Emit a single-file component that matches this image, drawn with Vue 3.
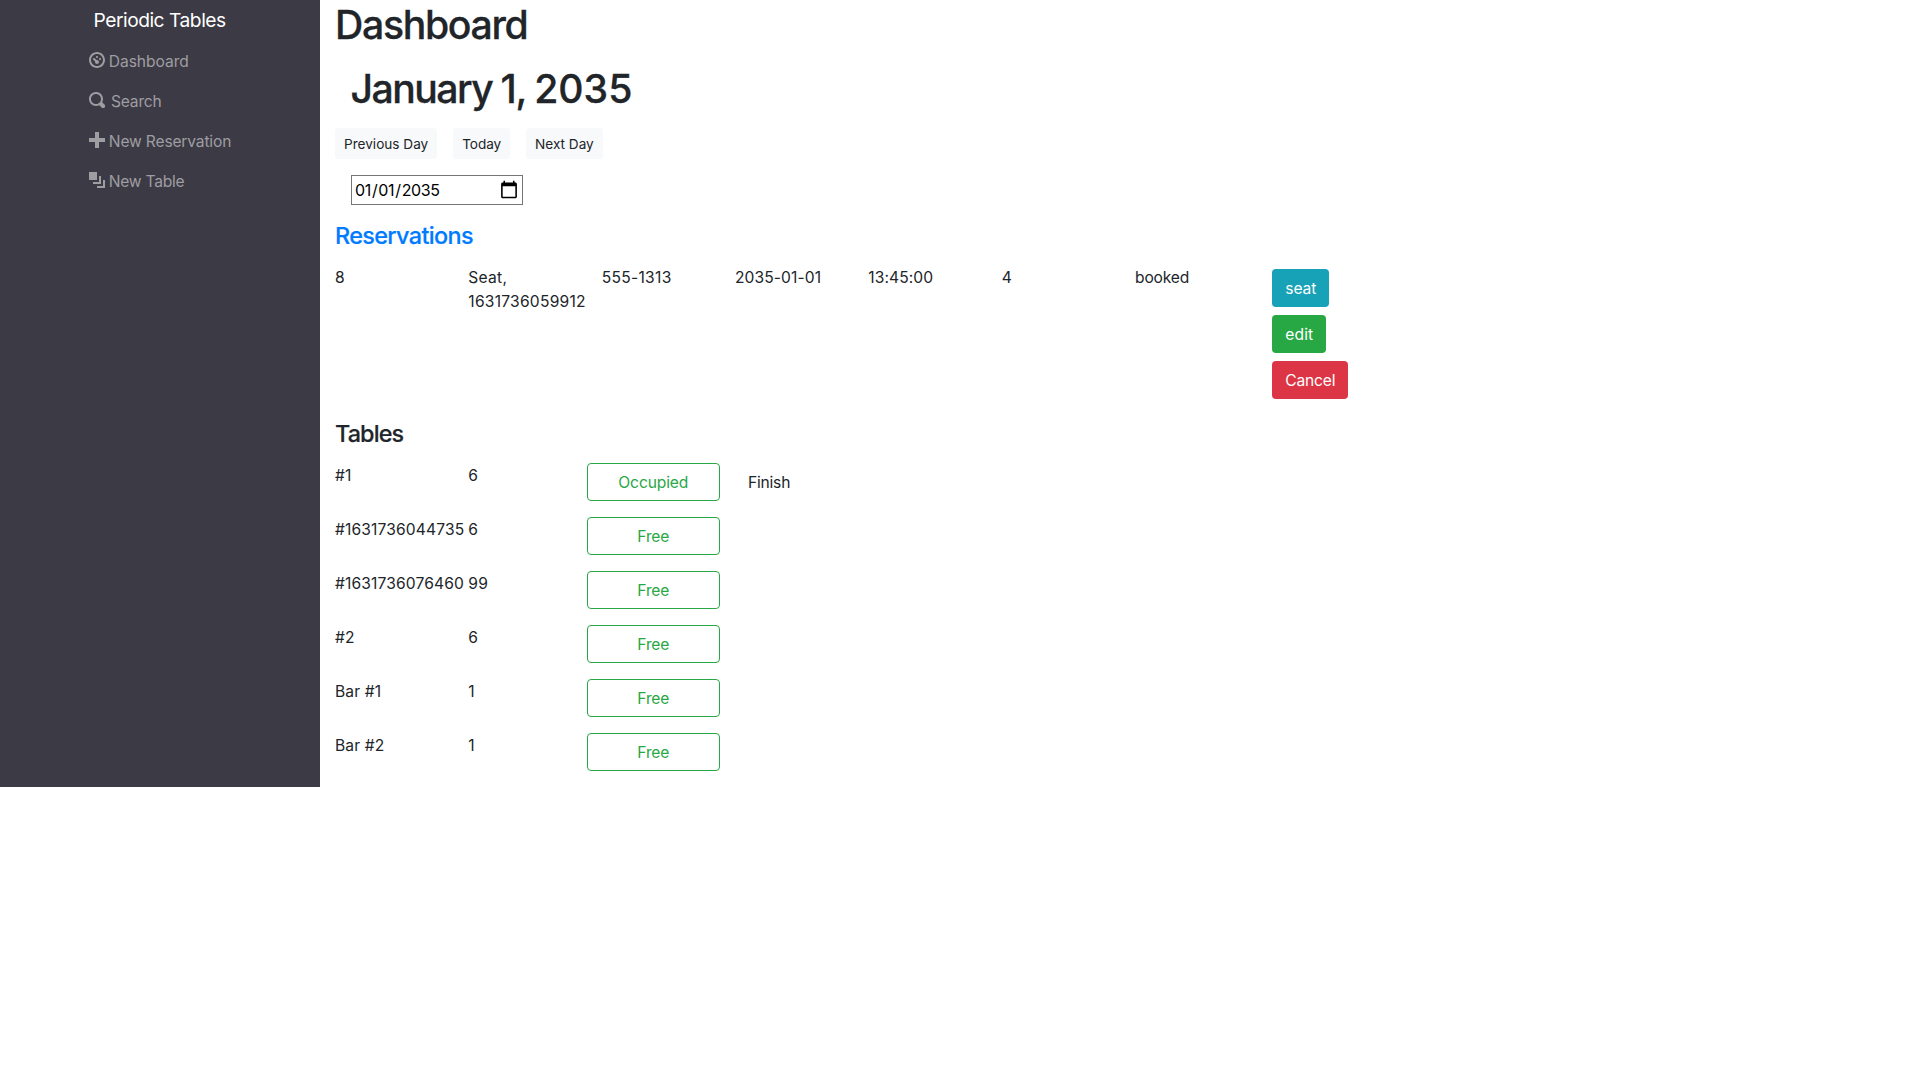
<script setup>
import { ref } from 'vue'

const nav = [
  {
    label: 'Dashboard',
    cls: 'wide',
    path: 'M4 0c-2.2 0-4 1.8-4 4s1.8 4 4 4 4-1.8 4-4-1.8-4-4-4zm0 1c1.66 0 3 1.34 3 3s-1.34 3-3 3-3-1.34-3-3 1.34-3 3-3zm0 1c-.28 0-.5.22-.5.5s.22.5.5.5.5-.22.5-.5-.22-.5-.5-.5zm-1.66 1a.5.5 0 0 0-.19.84l.91.91c-.02.08-.06.16-.06.25 0 .55.45 1 1 1s1-.45 1-1-.45-1-1-1c-.09 0-.17.04-.25.06l-.91-.91a.5.5 0 0 0-.5-.15zm3.16 0c-.28 0-.5.22-.5.5s.22.5.5.5.5-.22.5-.5-.22-.5-.5-.5z',
  },
  {
    label: 'Search',
    cls: 'search',
    path: 'M3.5 0c-1.93 0-3.5 1.57-3.5 3.5s1.57 3.5 3.5 3.5c.59 0 1.17-.14 1.66-.41a1 1 0 0 0 .13.13l1 1a1.02 1.02 0 1 0 1.44-1.44l-1-1a1 1 0 0 0-.16-.13c.27-.49.44-1.06.44-1.66 0-1.93-1.55-3.5-3.5-3.5zm0 1c1.39 0 2.5 1.11 2.5 2.5 0 .66-.24 1.27-.66 1.72l-.03.03a1 1 0 0 0-.13.13c-.44.4-1.04.63-1.69.63-1.39 0-2.5-1.11-2.5-2.5s1.11-2.5 2.5-2.5z',
  },
  { label: 'New Reservation', cls: '', path: 'M3 0v3h-3v2h3v3h2v-3h3v-2h-3v-3h-2z' },
  { label: 'New Table', cls: 'new-table', path: 'M0 0v4h4v-4h-4zm5 2v3h-3v1h4v-4h-1zm2 2v3h-3v1h4v-4h-1z' },
]

const date = ref('2035-01-01')

const reservations = [
  { id: 8, name: 'Seat, 1631736059912', phone: '555-1313', date: '2035-01-01', time: '13:45:00', people: 4, status: 'booked' },
]

const tables = [
  { name: '#1', capacity: 6, occupied: true },
  { name: '#1631736044735', capacity: 6 },
  { name: '#1631736076460', capacity: 99 },
  { name: '#2', capacity: 6 },
  { name: 'Bar #1', capacity: 1 },
  { name: 'Bar #2', capacity: 1 },
]
</script>

<template>
  <div class="layout">
    <nav class="sidebar">
      <div class="brand">Periodic Tables</div>
      <a v-for="item in nav" :key="item.label" class="nav-link" :class="item.cls">
        <svg class="icon" viewBox="0 0 8 8"><path :d="item.path" /></svg>
        <span class="label">{{ item.label }}</span>
      </a>
    </nav>

    <main class="content">
      <h1>Dashboard</h1>
      <h1 class="day"><span class="month">January</span> 1, <span class="year">2035</span></h1>
      <div class="day-buttons">
        <button class="btn-light">Previous Day</button>
        <button class="btn-light today">Today</button>
        <button class="btn-light">Next Day</button>
      </div>
      <input v-model="date" class="date" type="date" />

      <h4 class="reservations">Reservations</h4>
      <div v-for="r in reservations" :key="r.id" class="row">
        <div class="col num">{{ r.id }}</div>
        <div class="col num">{{ r.name }}</div>
        <div class="col phone">{{ r.phone }}</div>
        <div class="col date-cell">{{ r.date }}</div>
        <div class="col time">{{ r.time }}</div>
        <div class="col num">{{ r.people }}</div>
        <div class="col status">{{ r.status }}</div>
        <div class="col actions">
          <button class="btn info">seat</button>
          <button class="btn success">edit</button>
          <button class="btn danger">Cancel</button>
        </div>
      </div>

      <h4 class="tables">Tables</h4>
      <div v-for="t in tables" :key="t.name" class="row table-row">
        <div class="col table-name">{{ t.name }}</div>
        <div class="col capacity num">{{ t.capacity }}</div>
        <button class="btn outline">{{ t.occupied ? 'Occupied' : 'Free' }}</button>
        <button v-if="t.occupied" class="btn finish">Finish</button>
      </div>
    </main>
  </div>
</template>

<style>
body {
  margin: 0;
  background: #fff;
}
</style>

<style scoped>
* {
  box-sizing: border-box;
}
.layout {
  display: flex;
  height: 787px;
  font-family: Inter, "Liberation Sans", sans-serif;
  font-size: 15.6px;
  line-height: 24px;
  color: #212529;
}
.sidebar {
  width: 320px;
  flex: none;
  padding-left: 89px;
  background: #3c3a44;
}
.brand {
  height: 41px;
  padding-left: 4.5px;
  font-size: 19.2px;
  line-height: 40px;
  letter-spacing: -0.47px;
  color: #fff;
}
.nav-link {
  display: flex;
  gap: 3.8px;
  height: 40px;
  padding: 8px 0;
  letter-spacing: -0.17px;
  color: #9e9da2;
}
.nav-link.wide {
  letter-spacing: -0.06px;
}
.nav-link.search {
  gap: 6px;
  letter-spacing: -0.2px;
}
.nav-link.new-table {
  letter-spacing: -0.25px;
}
.label {
  padding-top: 1px;
}
.icon {
  width: 16px;
  height: 16px;
  margin-top: 3px;
  fill: currentColor;
}
.content {
  flex: 1;
  padding: 0 15px;
}
h1 {
  margin: 0;
  padding-top: 1px;
  font-size: 39.2px;
  font-weight: 500;
  line-height: 48px;
  letter-spacing: -1.32px;
  -webkit-text-stroke: 0.3px currentColor;
}
h1.day {
  margin: 15px 0 15px 15.5px;
  letter-spacing: -1.32px;
  word-spacing: -0.7px;
}
.month {
  letter-spacing: -1.55px;
}
.year {
  letter-spacing: 0;
}
button {
  font-family: inherit;
  color: #212529;
}
.day-buttons {
  display: flex;
  gap: 16px;
}
.btn-light {
  height: 31px;
  padding: 5px 8px 3px;
  border: 1px solid #f8f9fa;
  border-radius: 3px;
  background: #f8f9fa;
  font-size: 13.6px;
  line-height: 21px;
}
.today {
  letter-spacing: -0.1px;
}
.date {
  display: block;
  width: 172px;
  height: 30px;
  margin: 16px 0 0 16px;
  padding: 1px 2px;
  border: 1px solid #767676;
  background: #fff;
  color: #000;
  font-family: inherit;
  font-size: 16px;
  line-height: 24px;
  letter-spacing: -0.35px;
}
.date::-webkit-calendar-picker-indicator {
  width: 20px;
  height: 20px;
  margin-right: -1px;
}
h4 {
  padding-top: 1px;
  font-size: 23.4px;
  font-weight: 500;
  line-height: 28px;
  -webkit-text-stroke: 0.2px currentColor;
}
.reservations {
  margin: 16px 0 15px;
  letter-spacing: -0.64px;
  color: #007bff;
}
.tables {
  margin: 16px 0 15px;
  letter-spacing: -0.87px;
}
.row {
  display: flex;
}
.col {
  width: 133.33px;
  padding-top: 1px;
}
.num {
  letter-spacing: 0.24px;
}
.phone {
  letter-spacing: 0.3px;
}
.date-cell {
  letter-spacing: 0.1px;
}
.time {
  letter-spacing: 0.08px;
}
.status {
  letter-spacing: -0.14px;
}
.actions {
  display: flex;
  flex-direction: column;
  align-items: flex-start;
  gap: 8px;
  padding: 4px;
}
.btn {
  height: 38px;
  padding: 7px 12px 5px;
  border: 1px solid transparent;
  border-radius: 4px;
  background: none;
  font-size: 15.6px;
  line-height: 24px;
}
.info {
  background: #17a2b8;
  color: #fff;
  letter-spacing: -0.08px;
}
.success {
  background: #28a745;
  color: #fff;
  letter-spacing: 0.1px;
}
.danger {
  background: #dc3545;
  color: #fff;
  letter-spacing: -0.2px;
}
.table-row {
  margin-bottom: 16px;
}
.table-name {
  letter-spacing: 0.14px;
  white-space: nowrap;
}
.capacity {
  width: 118.3px;
}
.outline {
  width: 133.33px;
  border-color: #28a745;
  color: #28a745;
  letter-spacing: -0.12px;
}
.finish {
  margin-left: 15px;
  letter-spacing: -0.2px;
}
</style>
